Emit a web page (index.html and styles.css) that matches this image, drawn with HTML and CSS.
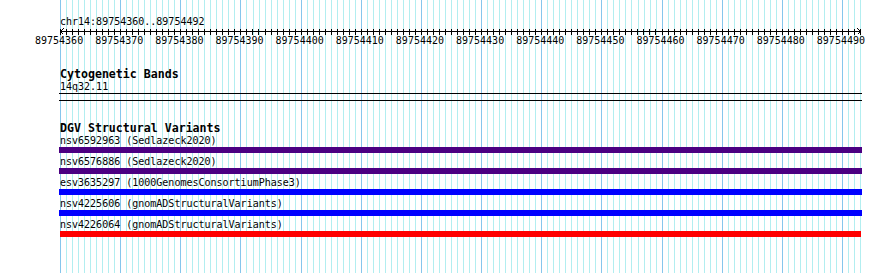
FILE: index.html
```html
<!DOCTYPE html>
<html lang="en">
<head>
    <meta charset="UTF-8">
    <title>chr14:89754360..89754492</title>
    <link rel="stylesheet" href="styles.css">
</head>
<body>
    <div class="view">
        <div class="grid" id="grid"></div>
        <div class="tracks">
            <div class="location">chr14:89754360..89754492</div>
            <svg class="ruler" id="ruler" width="802" height="7"></svg>
            <div class="scale" id="scale"></div>

            <section class="track">
                <h2 class="track-title">Cytogenetic Bands</h2>
                <div class="band-label">14q32.11</div>
                <div class="band-line"></div>
                <div class="track-sep"></div>
            </section>

            <section class="track">
                <h2 class="track-title">DGV Structural Variants</h2>
                <div class="feature">
                    <div class="feature-label">nsv6592963 (Sedlazeck2020)</div>
                    <div class="bar bar-purple"></div>
                </div>
                <div class="feature">
                    <div class="feature-label">nsv6576886 (Sedlazeck2020)</div>
                    <div class="bar bar-purple"></div>
                </div>
                <div class="feature">
                    <div class="feature-label">esv3635297 (1000GenomesConsortiumPhase3)</div>
                    <div class="bar bar-blue"></div>
                </div>
                <div class="feature">
                    <div class="feature-label">nsv4225606 (gnomADStructuralVariants)</div>
                    <div class="bar bar-blue"></div>
                </div>
                <div class="feature">
                    <div class="feature-label">nsv4226064 (gnomADStructuralVariants)</div>
                    <div class="bar bar-red"></div>
                </div>
            </section>
        </div>
    </div>
    <script src="script.js"></script>
</body>
</html>
```

FILE: styles.css
```css
html, body {
    margin: 0;
    padding: 0;
    background: #fff;
    color: #000;
    height: 273px;
    overflow: hidden;
}
body {
    font-family: "DejaVu Sans Mono", "Liberation Mono", monospace;
    font-size: 10px;
}
.view {
    display: grid;
    margin-left: 60px;
    width: 802px;
    height: 273px;
}
.grid, .tracks {
    grid-area: 1 / 1;
}
.grid {
    display: flex;
    width: 800px;
    height: 273px;
    border-right: 1px solid #b2eef0;
}
.grid i {
    flex: 1;
    border-left: 1px solid #b2eef0;
}
.grid i.major {
    border-left-color: #86c6ec;
}
.tracks {
    position: relative;
    min-width: 0;
}
.location {
    margin-top: 16px;
    line-height: 12px;
    height: 12px;
}
.ruler {
    display: block;
    overflow: visible;
}
.ruler line, .ruler polyline {
    stroke: #000;
    stroke-width: 1;
    fill: none;
    shape-rendering: crispEdges;
}
.scale {
    display: flex;
    margin-left: -25px;
    line-height: 12px;
    height: 12px;
    white-space: nowrap;
}
.scale span {
    flex: 0 0 60.15px;
}
.track-title {
    margin: 20px 0 0;
    font-size: 11.6px;
    font-weight: bold;
    line-height: 14px;
    height: 14px;
}
.band-label {
    line-height: 12px;
    height: 12px;
}
.band-line, .track-sep {
    margin-left: -1px;
    width: 803px;
    height: 1px;
    background: #000;
}
.track-sep {
    margin-top: 6px;
}
.feature {
    height: 21px;
}
.feature-label {
    line-height: 11px;
    height: 11px;
    margin-bottom: 1px;
    white-space: nowrap;
}
.bar {
    height: 6px;
}
.bar-purple {
    background: #4b0082;
    margin-left: -1px;
    width: 803px;
}
.bar-blue {
    background: #0000ff;
    margin-left: -1px;
    width: 803px;
}
.bar-red {
    background: #ff0000;
    width: 801px;
}
```

FILE: script.js
```js
// 133 bases (89754360..89754492) over 800px
const START = 89754360;
const BASES = 133;
const WIDTH = 800;
const step = WIDTH / BASES;

// Grid lines, one per base, darker every 10
const grid = document.getElementById("grid");
for (let i = 0; i < BASES; i++) {
    const cell = document.createElement("i");
    if (i % 10 === 0) cell.className = "major";
    grid.appendChild(cell);
}

// Ruler: axis, tick per base, arrows at both ends
const NS = "http://www.w3.org/2000/svg";
const ruler = document.getElementById("ruler");
function addLine(x1, y1, x2, y2) {
    const l = document.createElementNS(NS, "line");
    l.setAttribute("x1", x1);
    l.setAttribute("y1", y1);
    l.setAttribute("x2", x2);
    l.setAttribute("y2", y2);
    ruler.appendChild(l);
}
addLine(0, 3.5, 801, 3.5);
for (let i = 0; i <= BASES; i++) {
    const x = Math.round(i * step) + 0.5;
    addLine(x, 0.5, x, 6.5);
}
const left = document.createElementNS(NS, "polyline");
left.setAttribute("points", "3.5,0.5 0.5,3.5 3.5,6.5");
ruler.appendChild(left);
const right = document.createElementNS(NS, "polyline");
right.setAttribute("points", "797.5,0.5 800.5,3.5 797.5,6.5");
ruler.appendChild(right);

// Scale labels every 10 bases
const scale = document.getElementById("scale");
for (let pos = START; pos <= START + 130; pos += 10) {
    const label = document.createElement("span");
    label.textContent = pos;
    scale.appendChild(label);
}
```
